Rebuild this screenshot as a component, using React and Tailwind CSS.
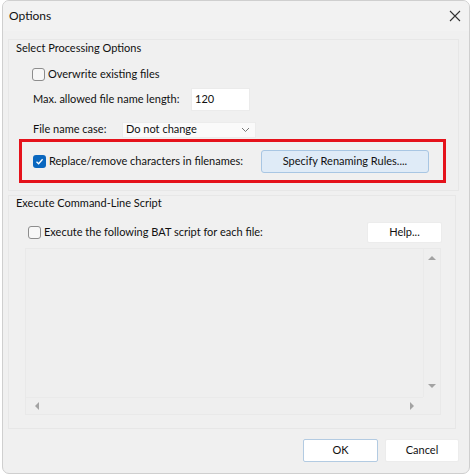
import React from 'react';

const font = { fontFamily: 'Lato, "Noto Sans", sans-serif' };

const CheckBox = ({ checked }) =>
  checked ? (
    <span className="w-[13px] h-[13px] rounded-[3px] bg-[#0a67bf] flex items-center justify-center shrink-0">
      <svg width="9" height="9" viewBox="0 0 9 9">
        <path d="M1.5 4.8 L3.6 6.8 L7.6 2.2" fill="none" stroke="white" strokeWidth="1.3" />
      </svg>
    </span>
  ) : (
    <span className="w-[13px] h-[13px] rounded-[3px] border border-[#8d8d8d] bg-[#f7f7f7] shrink-0" />
  );

const Arrow = ({ dir }) => {
  const paths = {
    up: 'M0 5 L4 1 L8 5 Z',
    down: 'M0 1 L8 1 L4 5 Z',
    left: 'M5 0 L5 8 L1 4 Z',
    right: 'M1 0 L5 4 L1 8 Z',
  };
  return (
    <svg width="8" height="8" viewBox="0 0 8 8">
      <path d={paths[dir]} fill="#a3a3a3" />
    </svg>
  );
};

export default function App() {
  return (
    <div className="w-[474px] h-[476px] bg-white text-[11px] text-[#111] whitespace-nowrap" style={font}>
      <div className="ml-[2px] w-[468px] h-[474px] border border-[#cfcfcf] rounded-[7px] bg-[#f0f0f0] flex flex-col overflow-hidden">
        {/* Title bar */}
        <div className="h-[30px] flex items-center justify-between pl-[6px] pr-[8px] bg-[#f2f2f2]">
          <span className="text-[12px]">Options</span>
          <svg width="12" height="12" viewBox="0 0 12 12">
            <path d="M1 1 L11 11 M11 1 L1 11" stroke="#333" strokeWidth="1.1" />
          </svg>
        </div>

        {/* Processing options */}
        <div className="mt-[8px] ml-[5px] w-[451px] h-[152px] border border-[#e7e7e7] flex flex-col">
          <div className="h-[17px] flex items-center pl-[7px]">Select Processing Options</div>

          <div className="mt-[9px] h-[16px] flex items-center gap-[3px] pl-[23px]">
            <CheckBox />
            <span>Overwrite existing files</span>
          </div>

          <div className="mt-[6px] h-[23px] flex items-center pl-[24px]">
            <span className="w-[158px] shrink-0">Max. allowed file name length:</span>
            <div className="w-[59px] h-[23px] bg-white border border-[#ebebeb] flex items-center pl-[3px]">120</div>
          </div>

          <div className="mt-[10px] h-[17px] flex items-center pl-[24px]">
            <span className="w-[89px] shrink-0">File name case:</span>
            <div className="w-[134px] h-[16px] bg-[#fafafa] border border-[#ececec] flex items-center justify-between pl-[3px] pr-[5px]">
              <span>Do not change</span>
              <svg width="9" height="6" viewBox="0 0 9 6">
                <path d="M1 1 L4.5 4.5 L8 1" fill="none" stroke="#777" strokeWidth="1" />
              </svg>
            </div>
          </div>

          <div className="mt-[1px] ml-[10px] w-[427px] h-[44px] border-[3px] border-[#e5121b] flex items-center pl-[11px]">
            <CheckBox checked />
            <span className="ml-[3px] w-[212px] shrink-0">Replace/remove characters in filenames:</span>
            <div className="w-[168px] h-[23px] rounded-[3px] bg-[#dfebf7] border border-[#a8c6e3] flex items-center justify-center">
              Specify Renaming Rules....
            </div>
          </div>
        </div>

        {/* Command-line script */}
        <div className="mt-[4px] ml-[5px] w-[448px] h-[234px] border border-[#e7e7e7] flex flex-col">
          <div className="h-[15px] flex items-center pl-[7px]">Execute Command-Line Script</div>

          <div className="mt-[11px] h-[21px] flex items-center pl-[19px]">
            <CheckBox />
            <span className="ml-[3px] flex-1">Execute the following BAT script for each file:</span>
            <div className="w-[75px] h-[21px] mr-[13px] bg-white border border-[#ececec] rounded-[2px] flex items-center justify-center">
              Help...
            </div>
          </div>

          <div className="mt-[5px] ml-[16px] w-[416px] h-[167px] border border-[#e9e9e9] bg-[#efefef] flex flex-col">
            <div className="flex-1 flex">
              <div className="flex-1" />
              <div className="w-[17px] border-l border-[#eaeaea] flex flex-col items-center justify-between pt-[6px] pb-[6px]">
                <Arrow dir="up" />
                <Arrow dir="down" />
              </div>
            </div>
            <div className="h-[17px] flex">
              <div className="flex-1 border-t border-[#eaeaea] flex items-center justify-between pl-[8px] pr-[6px]">
                <Arrow dir="left" />
                <Arrow dir="right" />
              </div>
              <div className="w-[17px]" />
            </div>
          </div>
        </div>

        {/* Footer */}
        <div className="mt-[10px] flex justify-end gap-[7px] pr-[10px]">
          <div className="w-[75px] h-[23px] bg-white border border-[#b3cbe2] rounded-[2px] flex items-center justify-center">OK</div>
          <div className="w-[74px] h-[23px] bg-white border border-[#ececec] rounded-[2px] flex items-center justify-center">Cancel</div>
        </div>
      </div>
    </div>
  );
}
